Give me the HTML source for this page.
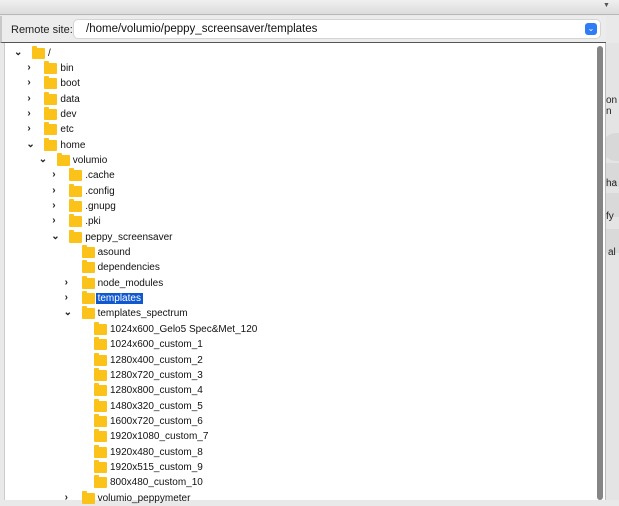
<!DOCTYPE html>
<html><head><style>
body{margin:0;width:619px;height:500px;overflow:hidden;background:#e9e9e9;font-family:"Liberation Sans",sans-serif;position:relative}
.top{position:absolute;left:0;top:0;width:619px;height:14px;background:linear-gradient(#f0f0f0,#dcdcdc);border-bottom:1px solid #b8b8b8}
.bar{position:absolute;left:0;top:16px;width:604px;height:26px;background:#ececec;border-left:2px solid #c8c8c8;border-bottom:1px solid #555}
.bar .lbl{position:absolute;left:9px;top:8px;font-size:11px;color:#222}
.bar .inp{position:absolute;left:72px;top:4px;width:526px;height:18px;background:#fff;border-radius:4px;box-shadow:0 0 0 1px #d4d4d4}
.bar .inp span{position:absolute;left:12px;top:3px;font-size:11.5px;color:#111}
.bar .dd{position:absolute;right:3px;top:3px;width:12px;height:12px;background:#2f7cf6;border-radius:3px;color:#fff;font-size:8px;text-align:center;line-height:12px}
.tree{position:absolute;left:4px;top:43px;width:600px;height:457px;background:#fff;border-left:1px solid #ccc}
.sb{position:absolute;left:597px;top:46px;width:6px;height:454px;background:#858585;border-radius:3px}
.side{position:absolute;left:605px;top:43px;width:14px;height:457px;background:#e4e4e4;border-left:1px solid #bbb;font-size:10px;color:#222;overflow:hidden}
.r{position:absolute;height:14px;font-size:10px;color:#111;white-space:nowrap}
.r .c{position:absolute;top:0;font-size:10px;color:#222;font-weight:bold}
.r .f{position:absolute;top:1px;width:13px;height:11px;background:#fbc21a;border-radius:1px}
.r .f:before{content:"";position:absolute;left:0;top:-2px;width:5px;height:3px;background:#fbc21a;border-radius:1px 1px 0 0}
.r .t{position:absolute;top:1px}
.sel{background:#1058d0;color:#fff;padding:0 2px;margin-left:-2px}
</style></head><body>
<div class="top"><span style="position:absolute;left:603px;top:2px;font-size:7px;color:#555">▼</span></div>
<div class="bar"><span class="lbl">Remote site:</span><div class="inp"><span>/home/volumio/peppy_screensaver/templates</span><div class="dd">⌄</div></div></div>
<div class="tree"></div>
<div class="sb"></div>
<div class="side">
<div style="position:absolute;top:52px;left:0">on<br>n</div>
<div style="position:absolute;top:90px;left:-4px;width:30px;height:28px;border-radius:14px;background:#d8d8d8"></div>
<div style="position:absolute;top:120px;left:0;width:14px;height:24px;background:#d9d9d9"></div>
<div style="position:absolute;top:135px;left:0">ha</div>
<div style="position:absolute;top:150px;left:0;width:14px;height:24px;background:#d9d9d9"></div>
<div style="position:absolute;top:168px;left:0">fy</div>
<div style="position:absolute;top:186px;left:0;width:14px;height:24px;background:#d9d9d9"></div>
<div style="position:absolute;top:204px;left:2px">al</div>
</div>
<div id="rows"></div>
<script>
var d=[[0,'v','/'],[1,'>','bin'],[1,'>','boot'],[1,'>','data'],[1,'>','dev'],[1,'>','etc'],[1,'v','home'],[2,'v','volumio'],[3,'>','.cache'],[3,'>','.config'],[3,'>','.gnupg'],[3,'>','.pki'],[3,'v','peppy_screensaver'],[4,'','asound'],[4,'','dependencies'],[4,'>','node_modules'],[4,'>','templates',1],[4,'v','templates_spectrum'],[5,'','1024x600_Gelo5 Spec&amp;Met_120'],[5,'','1024x600_custom_1'],[5,'','1280x400_custom_2'],[5,'','1280x720_custom_3'],[5,'','1280x800_custom_4'],[5,'','1480x320_custom_5'],[5,'','1600x720_custom_6'],[5,'','1920x1080_custom_7'],[5,'','1920x480_custom_8'],[5,'','1920x515_custom_9'],[5,'','800x480_custom_10'],[4,'>','volumio_peppymeter']];
var h='';d.forEach(function(r,i){var y=46.5+i*15.35,x=15+r[0]*12.4;
h+='<div class="r" style="top:'+y.toFixed(1)+'px;left:0">'+(r[1]?'<span class="c" style="left:'+(r[1]=='v'?x-1:x)+'px">'+(r[1]=='v'?'⌄':'›')+'</span>':'')+'<span class="f" style="left:'+(x+17)+'px"></span><span class="t'+(r[3]?' sel':'')+'" style="left:'+(x+33)+'px">'+r[2]+'</span></div>';});
document.getElementById('rows').innerHTML=h;
</script>
</body></html>
